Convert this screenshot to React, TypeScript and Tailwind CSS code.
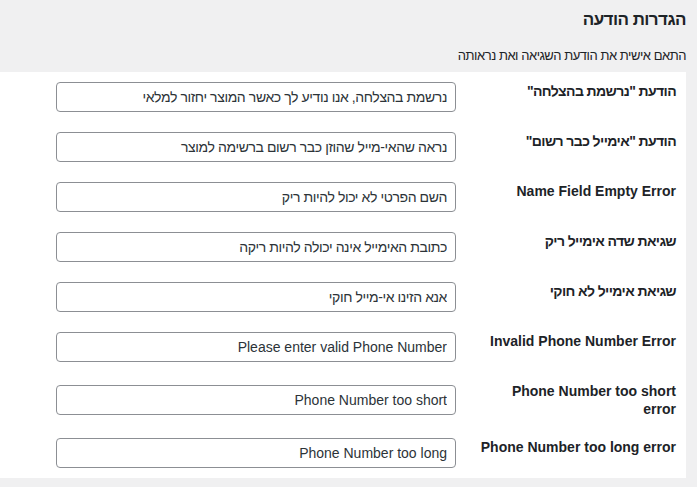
import React from 'react';

type Field = { label: string; value: string };

const fields: Field[] = [
  { label: 'הודעת "נרשמת בהצלחה"', value: 'נרשמת בהצלחה, אנו נודיע לך כאשר המוצר יחזור למלאי' },
  { label: 'הודעת "אימייל כבר רשום"', value: 'נראה שהאי-מייל שהוזן כבר רשום ברשימה למוצר' },
  { label: 'Name Field Empty Error', value: 'השם הפרטי לא יכול להיות ריק' },
  { label: 'שגיאת שדה אימייל ריק', value: 'כתובת האימייל אינה יכולה להיות ריקה' },
  { label: 'שגיאת אימייל לא חוקי', value: 'אנא הזינו אי-מייל חוקי' },
  { label: 'Invalid Phone Number Error', value: 'Please enter valid Phone Number' },
  { label: 'Phone Number too short error', value: 'Phone Number too short' },
  { label: 'Phone Number too long error', value: 'Phone Number too long' },
];

// Hebrew glyphs in the reference run a bit narrower than Liberation Sans
const isHebrew = (s: string) => /[\u0590-\u05FF]/.test(s);

const SettingRow: React.FC<{ field: Field }> = ({ field }) => (
  <div className="flex items-start">
    <label
      className={`w-[200px] shrink-0 pt-[10px] pb-[10px] pl-[10px] box-content text-[14px] leading-[18px] font-bold text-[#1d2327] ${
        isHebrew(field.label) ? 'tracking-[-0.6px]' : ''
      }`}
    >
      {field.label}
    </label>
    <div className="flex self-stretch items-center px-[10px] py-[10px]">
      <input
        type="text"
        defaultValue={field.value}
        className={`w-[400px] h-[30px] px-[8px] rounded-[4px] border border-[#8c8f94] bg-white text-[14px] text-[#2c3338] outline-none ${
          isHebrew(field.value) ? 'tracking-[-0.4px]' : ''
        }`}
      />
    </div>
  </div>
);

export default function App() {
  return (
    <div dir="rtl" className="w-full h-[487px] bg-[#f0f0f1] font-['Liberation_Sans',Arial,sans-serif] overflow-hidden">
      <div className="mr-[11px]">
        <h2 className="pt-[10px] text-[17px] leading-[20px] font-bold tracking-[-0.55px] text-[#1d2327]">הגדרות הודעה</h2>
        <p className="mt-[17px] text-[13px] leading-[18px] tracking-[-0.47px] text-[#1d2327]">התאם אישית את הודעת השגיאה ואת נראותה</p>
        <div className="mt-[7px] bg-white pr-[10px]">
          {fields.map((f) => (
            <SettingRow key={f.label} field={f} />
          ))}
        </div>
      </div>
    </div>
  );
}
